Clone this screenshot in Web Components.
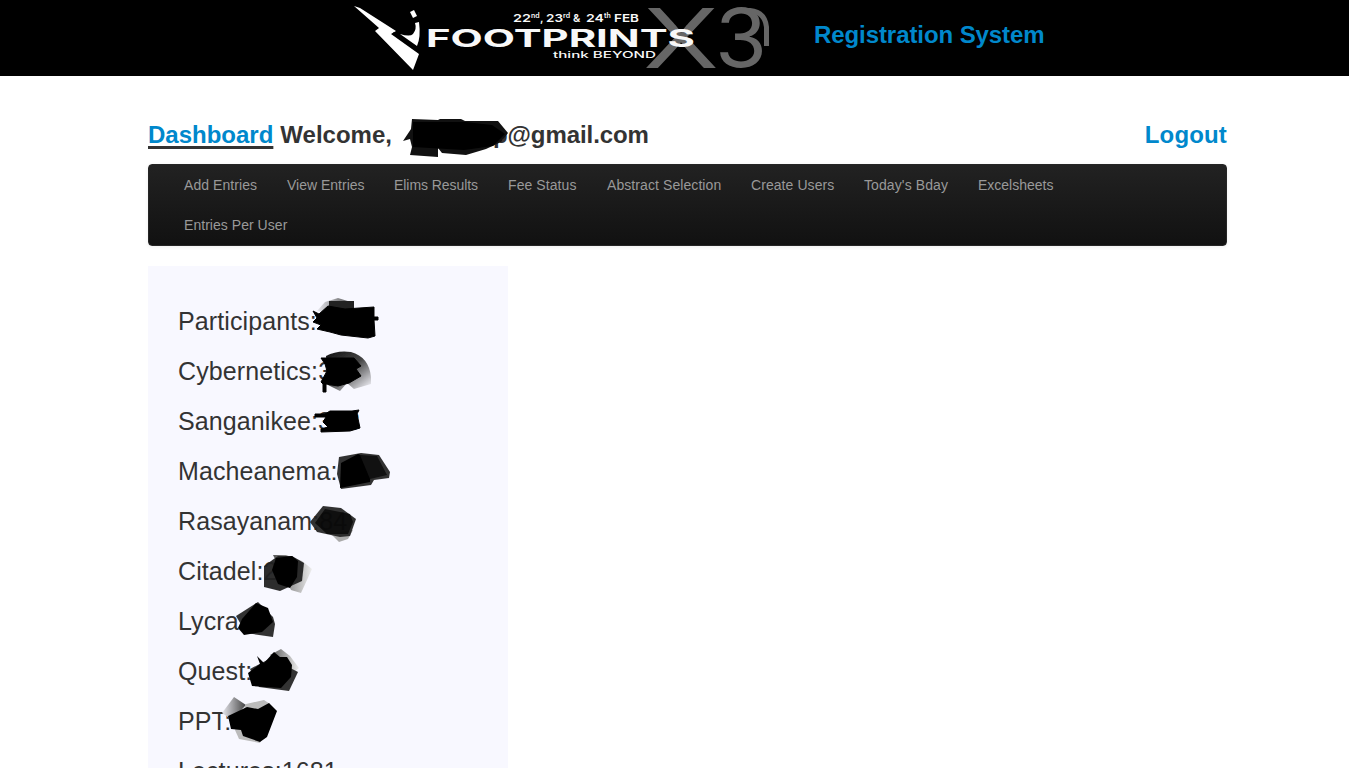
<!DOCTYPE html>
<html lang="en"><head><meta charset="utf-8"><title>Registration System</title>
<style>body{margin:0;background:#fff;color:#333;font-family:"Liberation Sans",Arial,sans-serif;position:relative;height:768px;overflow:hidden}</style></head>
<body>
<site-header>Registration System</site-header>
<page-shell>
<user-bar slot="user"></user-bar>
<nav-bar slot="nav"><nav-item style="--w:103px;--s:.06px">Add Entries</nav-item><nav-item style="--w:107px">View Entries</nav-item><nav-item style="--w:114px;--s:-.06px">Elims Results</nav-item><nav-item style="--w:99px;--s:.08px">Fee Status</nav-item><nav-item style="--w:144px;--s:.08px">Abstract Selection</nav-item><nav-item style="--w:113px;--s:.07px">Create Users</nav-item><nav-item style="--w:114px;--s:.1px">Today's Bday</nav-item><nav-item style="--w:105px">Excelsheets</nav-item><nav-item style="--w:134px;--s:.04px">Entries Per User</nav-item></nav-bar>
<stats-panel><stat-row>Participants:</stat-row><stat-row>Cybernetics:3</stat-row><stat-row>Sanganikee:383</stat-row><stat-row>Macheanema:</stat-row><stat-row>Rasayanam:84</stat-row><stat-row>Citadel:2&#8199;3</stat-row><stat-row>Lycra:</stat-row><stat-row>Quest:</stat-row><stat-row>PPT:</stat-row><stat-row>Lectures:1681</stat-row></stats-panel>
</page-shell>
<ink-marks></ink-marks>
<script>
const define=(name,html)=>customElements.define(name,class extends HTMLElement{
 constructor(){super();const t=document.createElement('template');t.innerHTML=html;this.attachShadow({mode:'open'}).append(t.content.cloneNode(true));}
});
define('brand-logo',`<style>:host{display:block;width:420px;height:76px}svg{display:block}text{font-family:Inter,"Liberation Sans",sans-serif}</style>
<svg width="420" height="76" viewBox="353 0 420 76">
<g fill="#666"><text x="0" y="0" font-weight="400" font-size="83" transform="translate(643 68.3)" textLength="76" lengthAdjust="spacingAndGlyphs">X</text>
<text transform="translate(715 67.3) scale(1 .97)" x="0" y="0" font-size="83" textLength="52" lengthAdjust="spacingAndGlyphs">3</text></g>
<g fill="none" stroke="#666"><path d="M657 10l47 56" stroke-width="2.500"/><path d="M742 10.500H750Q765 12 766.500 27V46" stroke-width="5"/></g>
<g fill="#fff"><path d="M354 6L360 8 396 31 391 34 419 54 413 70 375 31 379 28Z"/><path d="M400 34Q410 37 413 34 417 29 415 23L419 22Q421 37 417 46Z"/><path d="M410 12L414 10 417 16 413 18Z"/></g>
<path d="M393 33L416 47" stroke="#000" stroke-width="1.500"/>
<g fill="#f8f8f8"><text x="426" y="46.500" font-size="24" font-weight="700" textLength="269" lengthAdjust="spacingAndGlyphs">FOOTPRINTS</text>
<text x="513" y="22" font-size="11" font-weight="600" textLength="18" lengthAdjust="spacingAndGlyphs">22</text><text x="531" y="18" font-size="7" font-weight="600">nd</text><text x="540" y="22" font-size="11" font-weight="600">,</text>
<text x="546" y="22" font-size="11" font-weight="600" textLength="17" lengthAdjust="spacingAndGlyphs">23</text><text x="563" y="18" font-size="7" font-weight="600">rd</text><text x="573" y="22" font-size="11" font-weight="600">&amp;</text>
<text x="586" y="22" font-size="11" font-weight="600" textLength="18" lengthAdjust="spacingAndGlyphs">24</text><text x="604" y="18" font-size="7" font-weight="600">th</text><text x="614" y="22" font-size="11" font-weight="600" textLength="25" lengthAdjust="spacingAndGlyphs">FEB</text>
<text x="553" y="57.500" font-size="9" font-weight="500" textLength="103" lengthAdjust="spacingAndGlyphs">think BEYOND</text></g></svg>`);
define('site-header',`<style>:host{display:flex;height:76px;background:#000;padding-left:353px;box-sizing:border-box}h1{margin:15px 0 0 41px;color:#0088cc;font:bold 24px/40px "Liberation Sans",Arial,sans-serif;letter-spacing:-.08px;white-space:nowrap}</style><brand-logo></brand-logo><h1><slot></slot></h1>`);
define('page-shell',`<style>:host{display:block;width:1079px;margin:39px 0 0 148px}</style><slot name="user"></slot><slot name="nav"></slot><slot></slot>`);
define('user-bar',`<style>:host{display:flex;justify-content:space-between;height:49px;font-weight:bold;font-size:24px;line-height:40px;white-space:nowrap}a{color:#0088cc}.home{text-decoration:underline;text-decoration-color:#333;text-decoration-thickness:3px;text-underline-offset:3px;text-decoration-skip-ink:none;margin-right:7px}.mail{margin-left:101px;letter-spacing:-.08px}.out{letter-spacing:.15px}</style><div><a class="home">Dashboard</a><span>Welcome,</span><span class="mail">p@gmail.com</span></div><a class="out">Logout</a>`);
define('nav-bar',`<style>:host{display:flex;flex-wrap:wrap;box-sizing:border-box;height:82px;padding:0 130px 0 20px;border:1px solid #252525;border-radius:4px;background:linear-gradient(#222,#111);box-shadow:0 1px 4px rgba(0,0,0,.065)}</style><slot></slot>`);
define('nav-item',`<style>:host{display:block;box-sizing:border-box;width:var(--w);font-size:14px;line-height:20px;letter-spacing:var(--s,0);padding:10px 0 10px 15px;color:#999;height:40px;white-space:nowrap}</style><slot></slot>`);
define('stats-panel',`<style>:host{display:flex;flex-direction:column;box-sizing:border-box;width:360px;height:560px;margin-top:20px;padding:30px;background:#f8f8ff}</style><slot></slot>`);
define('stat-row',`<style>:host{display:block;flex:none;height:50px;font-size:25px;line-height:50px;letter-spacing:.1px;white-space:nowrap}</style><slot></slot>`);
define('ink-marks',`<style>:host{position:absolute;inset:0;pointer-events:none}svg{display:block}</style>
<svg width="1349" height="768"><defs><linearGradient id="g" x2=".9" y2="1"><stop stop-color="#111"/><stop offset=".5" stop-color="#444"/><stop offset="1" stop-color="#f4f4fa"/></linearGradient><linearGradient id="l" x2="1"><stop stop-color="#e8e8ee"/><stop offset="1" stop-color="#444"/></linearGradient><linearGradient id="r" x2="1"><stop stop-color="#555"/><stop offset="1" stop-color="#eee"/></linearGradient><filter id="b"><feGaussianBlur stdDeviation=".6"/></filter></defs>
<path fill="#111" d="M412 119L438 120 440 119 461 119 465 121 498 121 508 133 501 142 486 149 466 155 442 153 438 148V157L410 155 412 147 410 139 403 141 411 129Z"/><path d="M413 122H465L492 125 505 134 493 146 464 150 413 147Z"/>
<path filter="url(#b)" fill="url(#l)" d="M317 311L325 302 338 298 354 303 340 314Z"/><path fill="#222" d="M329 301H354V312H329Z"/><path stroke="#000" stroke-linejoin="round" d="M313 311L319 314 328 306 345 309 374 307V317H378V320H374L375 336 368 338 341 335 330 332 317 329 321 325 313 322 317 318Z"/>
<path filter="url(#b)" fill="url(#g)" d="M326 356Q337 350 351 352 369 357 371 377L371 384 354 389 347 383 340 391 328 385Z"/><path stroke="#000" stroke-linejoin="round" d="M321 358L354 358 361 366 356 369 361 376 349 383 338 386 326 384V392H323V384L321 382 327 371 325 364Z"/>
<path stroke="#000" stroke-linejoin="round" d="M315 414H325L330 411H352L359 410 357 414 360 428 350 431 321 432 321 429 328 427 323 422 326 417H315Z"/>
<g filter="url(#b)"><path fill="#333" d="M339 457L361 453 379 455 390 472 389 478 374 480 371 485 341 489 337 474Z"/></g><path d="M341 463L358 454 371 459 370 482 340 488Z"/><path fill="#111" d="M360 455L377 456 387 475 370 479Z"/>
<path filter="url(#b)" fill="#aaa" d="M331 534L353 530 348 539 339 542Z"/><path fill="#222" fill-opacity=".93" d="M323 506L341 508 356 519 350 536 340 537 317 532 310 522Z"/><path fill-opacity=".7" d="M325 509L350 514 353 522 348 534 327 534 315 523Z"/>
<path filter="url(#b)" fill="url(#r)" d="M273 555H286L302 561 312 569 307 580 301 593 291 590Z"/><path fill="#222" fill-opacity=".95" d="M264 566L278 556 292 556 304 563 302 581 280 591 264 587Z"/><path d="M276 558L292 556 298 561 297 577 290 588 278 584 272 570Z"/>
<path filter="url(#b)" fill="#333" d="M236 616L258 602 273 617 275 624 273 637 246 633Z"/><path d="M242 619L256 603 268 608 273 622 262 632 244 635 238 628Z"/>
<path filter="url(#b)" fill="url(#r)" d="M270 655L281 649 290 656 299 668 292 674Z"/><path fill="#333" d="M250 669L271 658 298 672 289 691 259 687Z"/><path d="M257 656L264 663 274 652 280 657 287 657 292 665 291 677 281 688 252 686 248 673 260 664Z"/>
<path filter="url(#b)" fill="url(#l)" d="M222 713L234 697 246 705 232 720Z"/><path filter="url(#b)" fill="#bbb" d="M235 730L246 704 264 700 270 704 260 743 239 739Z"/><path d="M228 716L247 707 258 709 269 703 277 711 267 737 260 742 243 736 241 730 231 729Z"/></svg>`);
</script></body></html>
